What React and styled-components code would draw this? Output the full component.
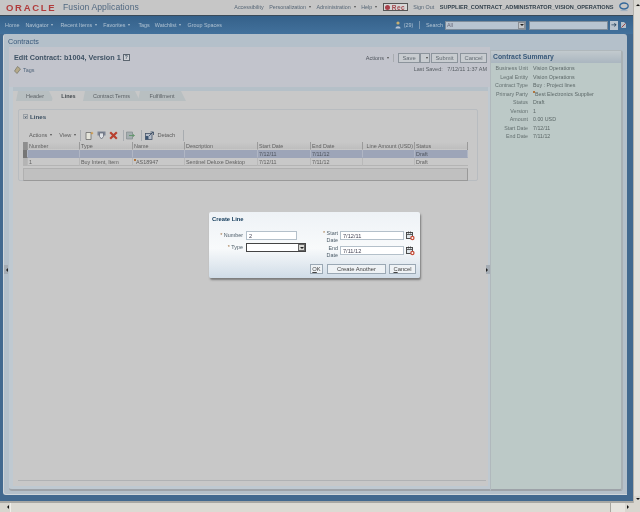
import React from 'react'
import styled, { createGlobalStyle } from 'styled-components'

const Global = createGlobalStyle`
  html, body { margin: 0; padding: 0; background: #c8c8c8; }
  * { box-sizing: border-box; }
  body { font-family: "Liberation Sans", Arial, sans-serif; font-size: 5.5px; color: #505050; }
`

const Shell = styled.div`
  position: relative;
  width: 640px;
  height: 512px;
  overflow: hidden;
  display: flex;
  flex-direction: column;
  filter: blur(0.3px);
`
const Upper = styled.div`
  display: flex;
  height: 503px;
`
const Page = styled.div`
  width: 633px;
  display: flex;
  flex-direction: column;
  background: #42698f;
  border-bottom: 2px solid #a8a8a4;
`

/* top strip */
const TopBar = styled.header`
  height: 16px;
  flex: none;
  display: flex;
  align-items: center;
  background: #c6c6c6;
  border-bottom: 1px solid #3a4a58;
  padding: 0 4px 1px 6px;
`
const OracleWord = styled.span`
  color: #b03c3c;
  font-size: 9.5px;
  font-weight: 700;
  letter-spacing: 1.7px;
  width: 57px;
`
const ProductName = styled.span`
  color: #506880;
  font-size: 8.6px;
  letter-spacing: 0.1px;
`
const TopLinks = styled.nav`
  margin-left: auto;
  display: flex;
  align-items: center;
  color: #566676;
  font-size: 5.4px;
  gap: 5.5px;
`
const Caret = styled.i`
  display: inline-block;
  margin-left: 3px;
  vertical-align: 1px;
  border: 1.5px solid transparent;
  border-top: 2px solid ${p => p.$color || '#505050'};
  border-bottom: 0;
`
const RecBox = styled.span`
  width: 25px;
  height: 8px;
  display: flex;
  align-items: center;
  background: #d6d6d6;
  border: 1px solid #555;
  color: #a34a50;
  font-size: 6.5px;
  font-weight: 700;
  letter-spacing: 0.5px;
`
const RecDot = styled.i`
  width: 5px;
  height: 5px;
  border-radius: 50%;
  background: #a8404a;
  margin: 0 2px 0 1px;
`
const UserName = styled.b`
  color: #34424d;
  font-size: 5.6px;
`

/* blue nav */
const NavBar = styled.nav`
  height: 18px;
  flex: none;
  display: flex;
  align-items: center;
  background: linear-gradient(#35618a, #42719c);
  color: #b0c2d2;
  font-size: 5.4px;
  padding: 0 6px 0 5px;
`
const NavItem = styled.span`
  margin-right: ${p => p.$gap || 6}px;
  white-space: nowrap;
`
const NavRight = styled.div`
  margin-left: auto;
  display: flex;
  align-items: center;
`
const FakeSelect = styled.span`
  width: ${p => p.$w}px;
  height: ${p => p.$h || 9}px;
  display: flex;
  align-items: center;
  justify-content: space-between;
  padding-left: 1px;
  background: ${p => p.$bg || '#b8c4d0'};
  color: #667;
  font-size: 5.4px;
  border: 1px solid ${p => p.$line || '#7e8c9a'};
`
const SelectArrow = styled.i`
  width: 7px;
  height: 7px;
  display: flex;
  align-items: center;
  justify-content: center;
  background: ${p => p.$bg || '#c2c6ca'};
  border: 1px solid ${p => p.$line || '#8a8f95'};
  &::after {
    content: '';
    border: 2px solid transparent;
    border-top: 2px solid #222;
    border-bottom: 0;
  }
`
const GoButton = styled.span`
  width: 8px;
  height: 9px;
  margin: 0 2px;
  background: #b9c4ce;
  color: #2e4a64;
  font-size: 7px;
  line-height: 8px;
  text-align: center;
`
const SearchGap = styled.span`
  width: 3px;
`

/* work area */
const Workspace = styled.main`
  flex: 1;
  min-height: 0;
  padding: 0 7px 6px 3px;
  display: flex;
`
const Panel = styled.div`
  flex: 1;
  display: flex;
  flex-direction: column;
  background: #b4c0ca;
  border-left: 1px solid #d0d6da;
  border-bottom: 1px solid #d0d6da;
  border-radius: 3px 3px 0 3px;
`
const PanelTitle = styled.h1`
  margin: 0;
  height: 13px;
  flex: none;
  padding: 3px 0 0 4px;
  font-size: 7.2px;
  font-weight: 400;
  color: #38587a;
`
const Columns = styled.div`
  flex: 1;
  min-height: 0;
  display: flex;
  padding: 0 4px 3px 5px;
`
const MainCard = styled.section`
  width: 481px;
  display: flex;
  flex-direction: column;
  background: #bfc9d1;
  border-radius: 3px 0 0 3px;
  border-bottom: 2px solid #9da2a8;
  padding: 0 0 3px 4px;
`
const CardHead = styled.div`
  height: 40px;
  flex: none;
  display: flex;
  justify-content: space-between;
  margin-left: -4px;
  padding: 6px 3px 0 5px;
  background: #c2c4cc;
`
const TitleBlock = styled.div`
  display: flex;
  flex-direction: column;
  gap: 4px;
`
const PageTitle = styled.h2`
  margin: 0;
  display: flex;
  align-items: center;
  gap: 2px;
  font-size: 7.25px;
  font-weight: 700;
  color: #3f5264;
`
const HelpBox = styled.span`
  width: 7px;
  height: 7px;
  border: 1px solid #5c6670;
  background: #d0d2d6;
  font-size: 5px;
  line-height: 5px;
  text-align: center;
`
const TagLink = styled.span`
  display: flex;
  align-items: center;
  gap: 2px;
  color: #50647a;
  font-size: 5.4px;
`
const ActionBlock = styled.div`
  display: flex;
  flex-direction: column;
  align-items: flex-end;
  gap: 3px;
`
const ActionRow = styled.div`
  display: flex;
  align-items: center;
  font-size: 5.6px;
  color: #4e545c;
`
const Divider = styled.i`
  width: 1px;
  height: ${p => p.$h || 8}px;
  background: ${p => p.$c || '#a8acb0'};
  margin: 0 ${p => p.$m || 4}px;
`
const Btn = styled.span`
  width: ${p => p.$w}px;
  height: ${p => p.$h || 10}px;
  margin-left: ${p => p.$ml || 0}px;
  display: flex;
  align-items: center;
  justify-content: center;
  background: ${p => p.$bg || '#c8ccd0'};
  border: 1px solid ${p => p.$line || '#8c949c'};
  color: ${p => p.$fg || '#626a72'};
  font-size: 5.8px;
`
const Saved = styled.div`
  font-size: 5.5px;
  color: #585e64;
`

const TabRail = styled.div`
  flex: none;
  height: 14px;
  background: linear-gradient(#b5c0c8 0 4px, #c8c8c8 4px);
  margin-right: 2px;
  padding: 4px 0 0 3px;
  display: flex;
`
const Tab = styled.span`
  width: ${p => p.$w}px;
  height: 10px;
  margin-right: -2px;
  padding-top: 2px;
  text-align: center;
  font-size: 5.5px;
  font-weight: ${p => (p.$on ? 700 : 400)};
  color: ${p => (p.$on ? '#42484d' : '#5c6266')};
  background: ${p => (p.$on ? '#c8c8c8' : '#b8bfc1')};
  clip-path: polygon(0 100%, 2px 0, calc(100% - 5px) 0, 100% 100%);
`
const TabBody = styled.div`
  flex: 1;
  min-height: 0;
  margin-right: 2px;
  background: #c8c8c8;
  padding: 8px 10px 0 5px;
  display: flex;
  flex-direction: column;
`
const LinesBox = styled.div`
  height: 72px;
  flex: none;
  border: 1px solid #b8bcc0;
  border-radius: 2px;
  padding: 2px 9px 0 4px;
`
const LinesHead = styled.div`
  display: flex;
  align-items: center;
  gap: 2px;
  height: 8px;
  font-size: 6.2px;
  font-weight: 700;
  color: #3c5062;
`
const Disclose = styled.span`
  width: 5px;
  height: 5px;
  border: 1px solid #9aa0a6;
  font-size: 4px;
  line-height: 3px;
  text-align: center;
`
const Toolbar = styled.div`
  height: 14px;
  margin-top: 8px;
  padding-left: 6px;
  display: flex;
  align-items: center;
  font-size: 5.6px;
  color: #5c5c5c;
`
const ViewGap = styled.span`
  width: 7px;
`
const ToolIcon = styled.svg`
  width: 9px;
  height: 9px;
  margin-right: 3px;
  flex: none;
`
const Grid = styled.div`
  display: grid;
  grid-template-columns: 5px 52px 53px 52px 73px 53px 52px 52px 53px;
  grid-auto-rows: 8px;
  font-size: 5.4px;
  border-right: 1px solid #8c8c8c;
  width: 445px;
`
const Cell = styled.div`
  padding-left: ${p => (p.$right ? 0 : 1)}px;
  padding-right: ${p => (p.$right ? 1 : 0)}px;
  text-align: ${p => (p.$right ? 'right' : 'left')};
  white-space: nowrap;
  overflow: hidden;
  line-height: 8px;
  border-right: 1px solid ${p => (p.$tone === 'head' ? '#9a9a9a' : p.$tone === 'sel' ? '#b0b6c4' : '#b9b9b9')};
  border-bottom: 1px solid ${p => (p.$tone === 'body' ? '#b4b4b4' : 'transparent')};
  color: ${p => (p.$tone === 'sel' ? '#4e545e' : '#606060')};
  background: ${p => (p.$tone === 'head' ? 'linear-gradient(#c8c8c8, #bebebe)' : p.$tone === 'sel' ? '#9da5b8' : '#c8c8c8')};
  &:last-child {
    border-right: 0;
  }
`
const RowHead = styled(Cell)`
  padding: 0;
  background: ${p => (p.$tone === 'head' ? '#8e8e8e' : p.$tone === 'sel' ? '#767676' : '#b4b4b4')};
`
const Mark = styled.i`
  display: inline-block;
  width: 2px;
  height: 2px;
  background: #b0743c;
  vertical-align: 3px;
`
const GridFooter = styled.div`
  height: 13px;
  margin-top: 2px;
  background: #c0c0c0;
  border: 1px solid #b0b0b0;
  border-bottom-color: #999;
  border-right-color: #999;
`
const FootLine = styled.div`
  margin-top: auto;
  margin-bottom: 5px;
  margin-right: -8px;
  height: 1px;
  background: #b0b2b4;
`

/* summary side */
const Summary = styled.aside`
  width: 133px;
  flex: none;
  margin-top: 3px;
  background: #bcc9c7;
  border: 1px solid #b0b8bc;
  border-right: 2px solid #a8b0b4;
  border-bottom: 2px solid #9da2a8;
  border-radius: 0 3px 3px 0;
`
const SummaryTitle = styled.h3`
  margin: 0;
  height: 12px;
  padding: 2px 0 0 2px;
  font-size: 6.8px;
  font-weight: 700;
  color: #38597a;
  background: linear-gradient(#c2cace, #aab6c0);
`
const SummaryList = styled.dl`
  margin: 1px 0 0;
  display: grid;
  grid-template-columns: 37px 1fr;
  column-gap: 5px;
  grid-auto-rows: 8.5px;
  line-height: 8.5px;
  font-size: 5.3px;
`
const Term = styled.dt`
  text-align: right;
  color: #647070;
  white-space: nowrap;
`
const Value = styled.dd`
  margin: 0;
  color: #5c6868;
  white-space: nowrap;
`

/* browser scrollbars */
const VScroll = styled.div`
  width: 7px;
  flex: none;
  background: #e2e0da;
  border-left: 1px solid #b4b2ac;
  display: flex;
  flex-direction: column;
  justify-content: space-between;
`
const ScrollEnd = styled.span`
  width: 7px;
  height: 7px;
  display: flex;
  align-items: center;
  justify-content: center;
  background: #d8d6cf;
  &::after {
    content: '';
    border: 2px solid transparent;
    border-${p => p.$dir}: 2px solid #111;
  }
`
const HScroll = styled.div`
  height: 9px;
  flex: none;
  display: flex;
  align-items: stretch;
  background: #d8d6cf;
  padding-left: 3px;
`
const HThumb = styled.div`
  flex: 1;
  background: #dcdad3;
  border-left: 1px solid #f0efe9;
  border-right: 1px solid #a8a69f;
`
const HTrack = styled.div`
  width: 14px;
  background: #e6e4de;
`
const Corner = styled.div`
  width: 8px;
  background: #d8d6cf;
`

/* things that sit over the page */
const Splitter = styled.span`
  position: absolute;
  top: 265px;
  left: ${p => p.$x}px;
  width: 4px;
  height: 9px;
  display: flex;
  align-items: center;
  justify-content: center;
  background: #a4acb4;
  &::after {
    content: '';
    border: 2px solid transparent;
    border-${p => p.$dir}: 2px solid #222;
  }
`
const Dialog = styled.div`
  position: absolute;
  left: 209px;
  top: 212px;
  width: 211px;
  height: 66px;
  padding: 4px 4px 0 3px;
  background: linear-gradient(#eef2f6 0, #f8fafb 55%, #d0dce7 100%);
  border-radius: 2px;
  box-shadow: 1px 2px 2px rgba(60, 60, 60, 0.55);
  display: flex;
  flex-direction: column;
`
const DialogTitle = styled.h4`
  margin: 0;
  font-size: 5.8px;
  line-height: 7px;
  font-weight: 700;
  color: #0f3858;
`
const DialogForm = styled.div`
  margin-top: 8px;
  display: flex;
  font-size: 5.4px;
  color: #4c5c68;
`
const FormColumn = styled.div`
  display: grid;
  grid-template-columns: ${p => p.$cols};
  grid-auto-rows: ${p => p.$row}px;
  column-gap: ${p => p.$gap}px;
  margin-right: ${p => p.$after || 0}px;
`
const FieldLabel = styled.label`
  text-align: right;
  line-height: ${p => (p.$stacked ? 7 : 8)}px;
  margin-top: ${p => (p.$stacked ? -1 : 0)}px;
  &::before {
    content: ${p => (p.$req ? "'* '" : "''")};
    color: #a07040;
  }
`
const TextInput = styled.span`
  height: 9px;
  width: ${p => (p.$w ? `${p.$w}px` : 'auto')};
  padding-left: 2px;
  line-height: 8px;
  background: #fff;
  border: 1px solid #b4c0ca;
  color: #445;
  font-size: 5.6px;
`
const DialogActions = styled.div`
  margin-top: auto;
  margin-bottom: 4px;
  display: flex;
  justify-content: flex-end;
`

const navItems = [
  ['Home', false, 6],
  ['Navigator', true, 7],
  ['Recent Items', true, 6],
  ['Favorites', true, 8],
  ['Tags', false, 5],
  ['Watchlist', true, 6],
  ['Group Spaces', false, 0],
]

const columns = ['Number', 'Type', 'Name', 'Description', 'Start Date', 'End Date', 'Line Amount (USD)', 'Status']
const rows = [
  { tone: 'sel', cells: ['', '', '', '', '7/12/11', '7/11/12', '', 'Draft'] },
  { tone: 'body', cells: ['1', 'Buy Intent, Item', 'AS18947', 'Sentinel Deluxe Desktop', '7/12/11', '7/11/12', '', 'Draft'] },
]

const summary = [
  ['Business Unit', 'Vision Operations'],
  ['Legal Entity', 'Vision Operations'],
  ['Contract Type', 'Buy : Project lines'],
  ['Primary Party', 'Best Electronics Supplier', true],
  ['Status', 'Draft'],
  ['Version', '1'],
  ['Amount', '0.00  USD'],
  ['Start Date', '7/12/11'],
  ['End Date', '7/11/12'],
]

function CalendarIcon() {
  return (
    <svg width="9" height="10" viewBox="0 0 9 10">
      <rect x="0.5" y="1.5" width="6" height="6" fill="#dfe6ea" stroke="#3c3c3c" strokeWidth="0.9" />
      <path d="M1 3.5h5M2.5 0.5v2M4.5 0.5v2" stroke="#3c3c3c" strokeWidth="0.8" />
      <circle cx="6.4" cy="7" r="2.2" fill="#c8503c" />
      <circle cx="6.4" cy="7" r="0.9" fill="#fff" />
    </svg>
  )
}

export default function App() {
  return (
    <Shell>
      <Global />
      <Upper>
        <Page>
          <TopBar>
            <OracleWord>ORACLE</OracleWord>
            <ProductName>Fusion Applications</ProductName>
            <TopLinks>
              <span>Accessibility</span>
              <span>Personalization<Caret /></span>
              <span>Administration<Caret /></span>
              <span>Help<Caret /></span>
              <RecBox><RecDot />Rec</RecBox>
              <span>Sign Out</span>
              <UserName>SUPPLIER_CONTRACT_ADMINISTRATOR_VISION_OPERATIONS</UserName>
              <svg width="10" height="10" viewBox="0 0 10 10">
                <ellipse cx="5" cy="4" rx="4.2" ry="3" fill="none" stroke="#35689a" strokeWidth="1.3" />
                <path d="M1.5 8.5h7" stroke="#9fb0c0" strokeWidth="1.2" />
              </svg>
            </TopLinks>
          </TopBar>

          <NavBar>
            {navItems.map(([label, menu, gap]) => (
              <NavItem key={label} $gap={gap}>
                {label}
                {menu && <Caret $color="#b0c2d2" />}
              </NavItem>
            ))}
            <NavRight>
              <svg width="6" height="8" viewBox="0 0 6 8">
                <circle cx="3" cy="2" r="1.6" fill="#c8b070" />
                <path d="M0.5 7.5c0-3 5-3 5 0z" fill="#b8c6d8" />
              </svg>
              <NavItem $gap={2}>&nbsp;&nbsp;(29)</NavItem>
              <Divider $c="#7c98b2" $m={0} />
              <NavItem $gap={2}>&nbsp;Search</NavItem>
              <FakeSelect $w={81}>
                All
                <SelectArrow />
              </FakeSelect>
              <SearchGap />
              <FakeSelect $w={79} />
              <GoButton>➔</GoButton>
              <svg width="7" height="8" viewBox="0 0 7 8">
                <path d="M1 1h3l2 2v4H1z" fill="#b4bfc8" />
                <path d="M1.5 6.5l4-4" stroke="#a04848" />
              </svg>
            </NavRight>
          </NavBar>

          <Workspace>
            <Panel>
              <PanelTitle>Contracts</PanelTitle>
              <Columns>
                <MainCard>
                  <CardHead>
                    <TitleBlock>
                      <PageTitle>
                        Edit Contract: b1004, Version 1<HelpBox>?</HelpBox>
                      </PageTitle>
                      <TagLink>
                        <svg width="7" height="8" viewBox="0 0 7 8">
                          <path d="M3.5 0.5L6.5 3 3 7.5 0.5 5z" fill="#b5a98a" stroke="#6a6a58" strokeWidth="0.6" />
                        </svg>
                        Tags
                      </TagLink>
                    </TitleBlock>
                    <ActionBlock>
                      <ActionRow>
                        Actions<Caret />
                        <Divider />
                        <Btn $w={22}>Save</Btn>
                        <Btn $w={10}><Caret $color="#444" /></Btn>
                        <Btn $w={27} $ml={1}>Submit</Btn>
                        <Btn $w={27} $ml={2}>Cancel</Btn>
                      </ActionRow>
                      <Saved>Last Saved:&nbsp;&nbsp;&nbsp;7/12/11 1:37 AM</Saved>
                    </ActionBlock>
                  </CardHead>

                  <TabRail>
                    <Tab $w={38}>Header</Tab>
                    <Tab $w={33} $on>Lines</Tab>
                    <Tab $w={57}>Contract Terms</Tab>
                    <Tab $w={48}>Fulfillment</Tab>
                  </TabRail>

                  <TabBody>
                    <LinesBox>
                      <LinesHead>
                        <Disclose>v</Disclose>
                        Lines
                      </LinesHead>
                      <Toolbar>
                        Actions<Caret />
                        <ViewGap />
                        View<Caret />
                        <Divider $h={11} $m={4} />
                        <ToolIcon viewBox="0 0 9 9">
                          <path d="M1 1.5h5v7H1z" fill="#e4e4da" stroke="#6c6c6c" strokeWidth="0.8" />
                          <path d="M7 0.5l.6 1.2 1.2.4-1.2.5L7 3.8l-.6-1.2-1.2-.5 1.2-.4z" fill="#d09030" />
                        </ToolIcon>
                        <ToolIcon viewBox="0 0 9 9">
                          <path d="M0.5 0.5h8v4H0.5z" fill="#7c8494" />
                          <path d="M2.5 2h4v3.5L4.5 8 2.5 5.5z" fill="#dfe2e6" stroke="#5c6270" strokeWidth="0.7" />
                        </ToolIcon>
                        <ToolIcon viewBox="0 0 9 9">
                          <path d="M1.2 1.2l6.6 6.6M7.8 1.2L1.2 7.8" stroke="#b8402f" strokeWidth="2.2" />
                        </ToolIcon>
                        <Divider $h={11} $m={2} />
                        <ToolIcon viewBox="0 0 9 9">
                          <path d="M0.5 1h6v7h-6z" fill="#a4aeb0" stroke="#7c8486" strokeWidth="0.6" />
                          <path d="M3 4.5h5M6.5 3L8.5 4.5 6.5 6" stroke="#5f9468" strokeWidth="0.9" fill="none" />
                        </ToolIcon>
                        <Divider $h={11} $m={3} />
                        <ToolIcon viewBox="0 0 9 9">
                          <rect x="0.5" y="2.5" width="6.5" height="6" fill="#b4bcc8" stroke="#465468" strokeWidth="0.8" />
                          <rect x="0.5" y="5" width="3" height="3.5" fill="#3c5470" />
                          <path d="M4 5l4-4M5.5 1h3v3" stroke="#344660" strokeWidth="0.8" fill="none" />
                        </ToolIcon>
                        Detach
                        <Divider $h={11} $m={8} />
                      </Toolbar>
                      <Grid>
                        <RowHead $tone="head" />
                        {columns.map(c => (
                          <Cell key={c} $tone="head" $right={c.startsWith('Line')}>{c}</Cell>
                        ))}
                        {rows.map(row => (
                          <React.Fragment key={row.tone}>
                            <RowHead $tone={row.tone} />
                            {row.cells.map((c, i) => (
                              <Cell key={i} $tone={row.tone}>
                                {c === 'AS18947' && <Mark />}
                                {c}
                              </Cell>
                            ))}
                          </React.Fragment>
                        ))}
                      </Grid>
                      <GridFooter />
                    </LinesBox>
                    <FootLine />
                  </TabBody>
                </MainCard>

                <Summary>
                  <SummaryTitle>Contract Summary</SummaryTitle>
                  <SummaryList>
                    {summary.map(([term, value, marked]) => (
                      <React.Fragment key={term}>
                        <Term>{term}</Term>
                        <Value>
                          {marked && <Mark />}
                          {value}
                        </Value>
                      </React.Fragment>
                    ))}
                  </SummaryList>
                </Summary>
              </Columns>
            </Panel>
          </Workspace>
        </Page>
        <VScroll>
          <ScrollEnd $dir="bottom" />
          <ScrollEnd $dir="top" />
        </VScroll>
      </Upper>

      <HScroll>
        <ScrollEnd $dir="right" />
        <HThumb />
        <HTrack />
        <ScrollEnd $dir="left" />
        <Corner />
      </HScroll>

      <Splitter $x={4} $dir="right" />
      <Splitter $x={486} $dir="left" />

      <Dialog>
        <DialogTitle>Create Line</DialogTitle>
        <DialogForm>
          <FormColumn $cols="31px 60px" $row={12} $gap={3} $after={16}>
            <FieldLabel $req>Number</FieldLabel>
            <TextInput $w={51}>2</TextInput>
            <FieldLabel $req>Type</FieldLabel>
            <FakeSelect $w={60} $bg="#fff" $line="#444">
              <span />
              <SelectArrow $bg="#d8d8d4" $line="#666" />
            </FakeSelect>
          </FormColumn>
          <FormColumn $cols="16px 64px 9px" $row={15} $gap={2}>
            <FieldLabel $req $stacked>Start Date</FieldLabel>
            <TextInput>7/12/11</TextInput>
            <CalendarIcon />
            <FieldLabel $stacked>End Date</FieldLabel>
            <TextInput>7/11/12</TextInput>
            <CalendarIcon />
          </FormColumn>
        </DialogForm>
        <DialogActions>
          <Btn $w={13} $bg="#eef2f5" $line="#9aa8b4" $fg="#444"><u>O</u>K</Btn>
          <Btn $w={59} $ml={4} $bg="#eef2f5" $line="#9aa8b4" $fg="#444">Create Another</Btn>
          <Btn $w={27} $ml={3} $bg="#eef2f5" $line="#9aa8b4" $fg="#444"><u>C</u>ancel</Btn>
        </DialogActions>
      </Dialog>
    </Shell>
  )
}
